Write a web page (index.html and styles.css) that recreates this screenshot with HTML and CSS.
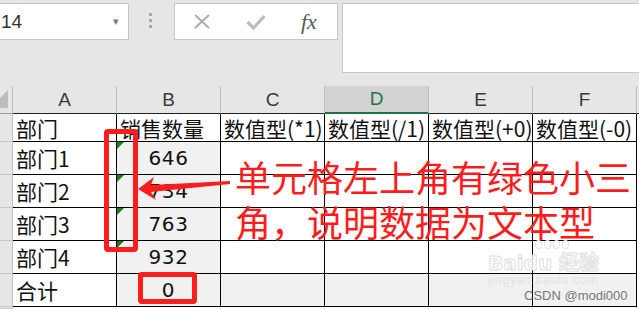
FILE: index.html
```html
<!DOCTYPE html>
<html lang="zh-CN">
<head>
    <meta charset="UTF-8">
    <meta name="viewport" content="width=device-width, initial-scale=1.0">
    <title>文本型数字</title>
    <link rel="stylesheet" href="styles.css">
</head>
<body>
    <div class="app">
        <div class="formula-bar">
            <div class="name-box">
                <span>14</span>
                <span class="drop">&#9662;</span>
            </div>
            <div class="grip"><i></i><i></i><i></i></div>
            <div class="fx-buttons">
                <svg class="btn-x" width="18" height="15" viewBox="0 0 18 15">
                    <path d="M2 1 L16 14 M16 1 L2 14" stroke="#a9a9a9" stroke-width="1.8" fill="none"/>
                </svg>
                <svg class="btn-ok" width="20" height="16" viewBox="0 0 20 16">
                    <path d="M1.5 8 L7.5 14 L18.5 2" stroke="#bdbdbd" stroke-width="3.2" fill="none"/>
                </svg>
                <span class="fx">fx</span>
            </div>
            <div class="formula-input"></div>
        </div>

        <div class="sheet">
            <div class="corner"><span class="select-all"></span></div>
            <div class="col-head">A</div>
            <div class="col-head">B</div>
            <div class="col-head">C</div>
            <div class="col-head active">D</div>
            <div class="col-head">E</div>
            <div class="col-head">F</div>
            <div class="col-head last"></div>

            <div class="row-head"></div>
            <div class="cell">部门</div>
            <div class="cell">销售数量</div>
            <div class="cell">数值型(*1)</div>
            <div class="cell">数值型(/1)</div>
            <div class="cell">数值型(+0)</div>
            <div class="cell">数值型(-0)</div>
            <div class="cell last"></div>

            <div class="row-head"></div>
            <div class="cell">部门1</div>
            <div class="cell shade num"><span class="flag"></span>646</div>
            <div class="cell"></div>
            <div class="cell"></div>
            <div class="cell"></div>
            <div class="cell"></div>
            <div class="cell last"></div>

            <div class="row-head"></div>
            <div class="cell">部门2</div>
            <div class="cell shade num"><span class="flag"></span>734</div>
            <div class="cell"></div>
            <div class="cell"></div>
            <div class="cell"></div>
            <div class="cell"></div>
            <div class="cell last"></div>

            <div class="row-head"></div>
            <div class="cell">部门3</div>
            <div class="cell shade num"><span class="flag"></span>763</div>
            <div class="cell"></div>
            <div class="cell"></div>
            <div class="cell"></div>
            <div class="cell"></div>
            <div class="cell last"></div>

            <div class="row-head"></div>
            <div class="cell">部门4</div>
            <div class="cell shade num"><span class="flag"></span>932</div>
            <div class="cell"></div>
            <div class="cell"></div>
            <div class="cell"></div>
            <div class="cell"></div>
            <div class="cell last"></div>

            <div class="row-head"></div>
            <div class="cell">合计</div>
            <div class="cell shade num">0</div>
            <div class="cell shade"></div>
            <div class="cell shade"></div>
            <div class="cell shade"></div>
            <div class="cell shade"></div>
            <div class="cell last"></div>

            <div class="row-head"></div>
            <div class="cell blank"></div>
            <div class="cell blank"></div>
            <div class="cell blank"></div>
            <div class="cell blank"></div>
            <div class="cell blank"></div>
            <div class="cell blank"></div>
            <div class="cell last"></div>
        </div>

        <!-- annotations drawn over the sheet -->
        <div class="mark mark-col"></div>
        <div class="mark mark-sum"></div>
        <svg class="arrow" width="100" height="30" viewBox="0 0 100 30">
            <path d="M0 14 L16 2 L13 10 L92 6 L92 9 L13 17 L18 25 Z" fill="#fe1d1d"/>
        </svg>
        <div class="note">单元格左上角有绿色小三<br>角，说明数据为文本型</div>

        <div class="watermark">
            <div class="paw"><i></i><i></i><i></i><i></i></div>
            <div class="wm-logo">Baidu 经验</div>
            <div class="wm-url">jingyan.baidu.com</div>
        </div>
        <div class="credit">CSDN @modi000</div>
    </div>
</body>
</html>
```

FILE: styles.css
```css
body {
    margin: 0;
    padding: 0;
    background: #e6e6e6;
    font-family: "Noto Sans CJK SC", "Noto Sans", sans-serif;
}
.app {
    position: relative;
    width: 639px;
    height: 309px;
    overflow: hidden;
}

/* formula bar */
.formula-bar {
    display: flex;
    align-items: flex-start;
    height: 86px;
    padding-top: 3px;
    box-sizing: border-box;
}
.name-box {
    display: flex;
    align-items: center;
    justify-content: space-between;
    margin-left: -1px;
    width: 130px;
    height: 37px;
    padding: 0 9px 0 1px;
    box-sizing: border-box;
    background: #fff;
    border: 1px solid #c6c6c6;
    font-family: "Liberation Sans", Arial, sans-serif;
    font-size: 19px;
    color: #333;
}
.name-box .drop {
    font-size: 11px;
    color: #7a7a7a;
}
.grip {
    display: flex;
    flex-direction: column;
    gap: 3px;
    margin: 10px 22px 0 20px;
}
.grip i {
    display: block;
    width: 3px;
    height: 3px;
    background: #a8a8a8;
}
.fx-buttons {
    display: flex;
    align-items: center;
    width: 164px;
    height: 37px;
    box-sizing: border-box;
    background: #fff;
    border: 1px solid #c6c6c6;
}
.btn-x {
    margin-left: 18px;
}
.btn-ok {
    margin-left: 35px;
}
.fx {
    margin-left: 35px;
    font-family: "Liberation Serif", "Times New Roman", serif;
    font-style: italic;
    font-size: 22px;
    color: #595959;
}
.formula-input {
    flex: 1;
    margin-left: 4px;
    height: 68px;
    background: #fff;
    border: 1px solid #c6c6c6;
    border-right: none;
}

/* sheet grid */
.sheet {
    display: grid;
    grid-template-columns: 13px repeat(6, 104px) 1fr;
    grid-template-rows: 28px 28px repeat(5, 33px) 1fr;
    height: 223px;
    background: #fff;
}
.sheet > div {
    box-sizing: border-box;
    overflow: hidden;
    white-space: nowrap;
}
.corner {
    display: flex;
    justify-content: flex-end;
    align-items: flex-end;
    padding: 0 4px 5px 0;
    background: #e6e6e6;
    border-right: 1px solid #bfbfbf;
    border-bottom: 1px solid #9b9b9b;
}
.select-all {
    flex: none;
    width: 0;
    height: 0;
    border-left: 18px solid transparent;
    border-bottom: 18px solid #bdbdbd;
}
.col-head {
    display: flex;
    align-items: center;
    justify-content: center;
    background: #e6e6e6;
    border-right: 1px solid #bfbfbf;
    border-bottom: 1px solid #222;
    font-family: "Liberation Sans", Arial, sans-serif;
    font-size: 19px;
    color: #3a3a3a;
}
.col-head.active {
    background: #d3d3d3;
    color: #217346;
    border-bottom: 2px solid #217346;
}
.col-head.last {
    border-right: none;
}
.row-head {
    background: #e6e6e6;
    border-right: 1px solid #bfbfbf;
    border-bottom: 1px solid #c9c9c9;
}
.cell {
    position: relative;
    display: flex;
    align-items: center;
    padding: 0 3px;
    border-right: 1px solid #000;
    border-bottom: 1px solid #000;
    font-size: 21px;
    color: #111;
}
.cell.shade {
    background: #f1f1f1;
}
.cell.num {
    justify-content: center;
    font-family: "DejaVu Sans", sans-serif;
    font-size: 20px;
    letter-spacing: 0.6px;
}
.cell.blank {
    border-right: 1px solid #d4d4d4;
    border-bottom: none;
}
.cell.last {
    border-right: none;
    border-bottom: none;
    background: #fff;
}
.flag {
    position: absolute;
    top: 0;
    left: 0;
    width: 0;
    height: 0;
    border-top: 7px solid #1a7f1a;
    border-right: 7px solid transparent;
}

/* red annotations */
.mark {
    position: absolute;
    border: 5px solid #fe1d1d;
    border-radius: 4px;
    box-sizing: border-box;
}
.mark-col {
    left: 104px;
    top: 129px;
    width: 34px;
    height: 123px;
}
.mark-sum {
    left: 138px;
    top: 272px;
    width: 59px;
    height: 32px;
}
.arrow {
    position: absolute;
    left: 138px;
    top: 175px;
}
.note {
    position: absolute;
    left: 235px;
    top: 154px;
    font-size: 36px;
    line-height: 45px;
    color: #fe1d1d;
    white-space: nowrap;
}

/* watermark and credit */
.watermark {
    position: absolute;
    left: 488px;
    top: 240px;
    white-space: nowrap;
    color: #fdfdfd;
}
.paw {
    display: flex;
    gap: 2px;
    margin-left: 47px;
    height: 12px;
}
.paw i {
    display: block;
    width: 5px;
    height: 7px;
    border: 1px solid #e4e4e4;
    border-radius: 50%;
}
.wm-logo {
    font-family: "DejaVu Sans", "Noto Sans CJK SC", sans-serif;
    font-weight: bold;
    font-size: 20px;
    line-height: 22px;
    -webkit-text-stroke: 1px #e0e0e0;
}
.wm-url {
    font-family: "Liberation Sans", Arial, sans-serif;
    font-size: 12px;
    line-height: 13px;
    color: #e3e3e3;
    letter-spacing: 0.8px;
}
.credit {
    position: absolute;
    left: 524px;
    top: 288px;
    font-family: "Liberation Sans", Arial, sans-serif;
    font-size: 13px;
    color: #777;
}
```
